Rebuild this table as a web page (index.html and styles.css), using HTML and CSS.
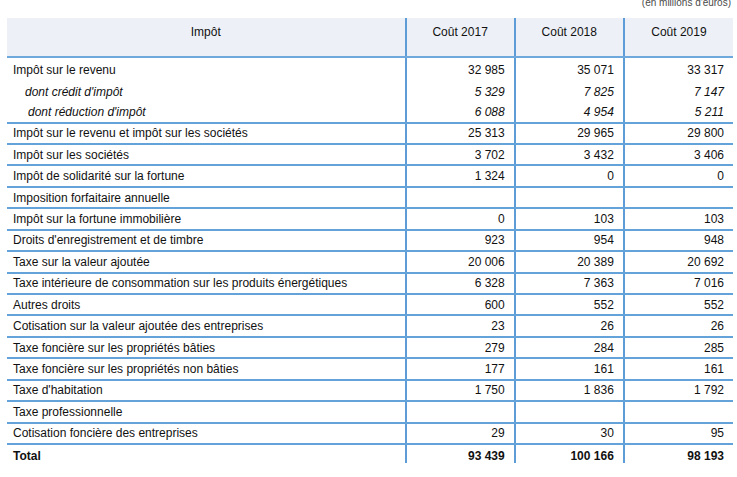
FILE: index.html
```html
<!DOCTYPE html>
<html lang="fr">
<head>
<meta charset="utf-8">
<link rel="stylesheet" href="styles.css">
</head>
<body>
<div class="page">
  <div class="unit">(en millions d'euros)</div>
  <table class="tbl">
    <colgroup>
      <col class="c-label"><col class="c-num"><col class="c-num"><col class="c-num">
    </colgroup>
    <thead>
      <tr><th>Impôt</th><th>Coût 2017</th><th>Coût 2018</th><th>Coût 2019</th></tr>
    </thead>
    <tbody>
      <tr class="grp first"><td>Impôt sur le revenu</td><td>32 985</td><td>35 071</td><td>33 317</td></tr>
      <tr class="grp sub"><td class="ind1">dont crédit d'impôt</td><td>5 329</td><td>7 825</td><td>7 147</td></tr>
      <tr class="sub last"><td class="ind2">dont réduction d'impôt</td><td>6 088</td><td>4 954</td><td>5 211</td></tr>
      <tr><td>Impôt sur le revenu et impôt sur les sociétés</td><td>25 313</td><td>29 965</td><td>29 800</td></tr>
      <tr><td>Impôt sur les sociétés</td><td>3 702</td><td>3 432</td><td>3 406</td></tr>
      <tr><td>Impôt de solidarité sur la fortune</td><td>1 324</td><td>0</td><td>0</td></tr>
      <tr><td>Imposition forfaitaire annuelle</td><td></td><td></td><td></td></tr>
      <tr><td>Impôt sur la fortune immobilière</td><td>0</td><td>103</td><td>103</td></tr>
      <tr><td>Droits d'enregistrement et de timbre</td><td>923</td><td>954</td><td>948</td></tr>
      <tr><td>Taxe sur la valeur ajoutée</td><td>20 006</td><td>20 389</td><td>20 692</td></tr>
      <tr><td>Taxe intérieure de consommation sur les produits énergétiques</td><td>6 328</td><td>7 363</td><td>7 016</td></tr>
      <tr><td>Autres droits</td><td>600</td><td>552</td><td>552</td></tr>
      <tr><td>Cotisation sur la valeur ajoutée des entreprises</td><td>23</td><td>26</td><td>26</td></tr>
      <tr><td>Taxe foncière sur les propriétés bâties</td><td>279</td><td>284</td><td>285</td></tr>
      <tr><td>Taxe foncière sur les propriétés non bâties</td><td>177</td><td>161</td><td>161</td></tr>
      <tr><td>Taxe d'habitation</td><td>1 750</td><td>1 836</td><td>1 792</td></tr>
      <tr><td>Taxe professionnelle</td><td></td><td></td><td></td></tr>
      <tr><td>Cotisation foncière des entreprises</td><td>29</td><td>30</td><td>95</td></tr>
      <tr class="total"><td>Total</td><td>93 439</td><td>100 166</td><td>98 193</td></tr>
    </tbody>
  </table>
</div>
</body>
</html>
```
FILE: styles.css
```css
html, body {
  margin: 0;
  padding: 0;
  background: #ffffff;
}
.page {
  padding: 0 4px 0 7px;
  font-family: "Liberation Sans", Arial, sans-serif;
  font-size: 12px;
  color: #111111;
}
.unit {
  height: 21px;
  margin-top: -3px;
  text-align: right;
  padding-right: 2px;
  font-size: 10px;
  line-height: 12px;
  color: #4a4a4a;
}
.tbl {
  width: 726px;
  border-collapse: collapse;
  table-layout: fixed;
}
.c-label { width: 398px; }
.c-num { width: 109px; }
.tbl th {
  background: #edf0f7;
  font-weight: normal;
  text-align: center;
  vertical-align: top;
  height: 39px;
  box-sizing: border-box;
  padding: 7px 4px 0;
  line-height: 14px;
  border-bottom: 2px solid #6ea8dd;
  border-left: 2px solid #5d9cd6;
}
.tbl th:first-child { border-left: none; }
.tbl td {
  height: 19.45px;
  padding: 0 9px 0 6px;
  line-height: 14px;
  text-align: right;
  white-space: nowrap;
  border-bottom: 2px solid #64a2da;
  border-left: 2px solid #5d9cd6;
}
.tbl td:first-child {
  text-align: left;
  border-left: none;
}
.tbl tr.grp td { border-bottom: none; height: 20px; }
.tbl tr.first td { height: 23.5px; }
.tbl tr.sub td { font-style: italic; height: 20px; }
.tbl tr.last td { height: 20px; }
.tbl td.ind1 { padding-left: 18px; }
.tbl td.ind2 { padding-left: 21px; }
.tbl tr.total td {
  font-weight: bold;
  border-bottom: none;
  vertical-align: top;
  height: 13px;
  padding-top: 4px;
}
```
